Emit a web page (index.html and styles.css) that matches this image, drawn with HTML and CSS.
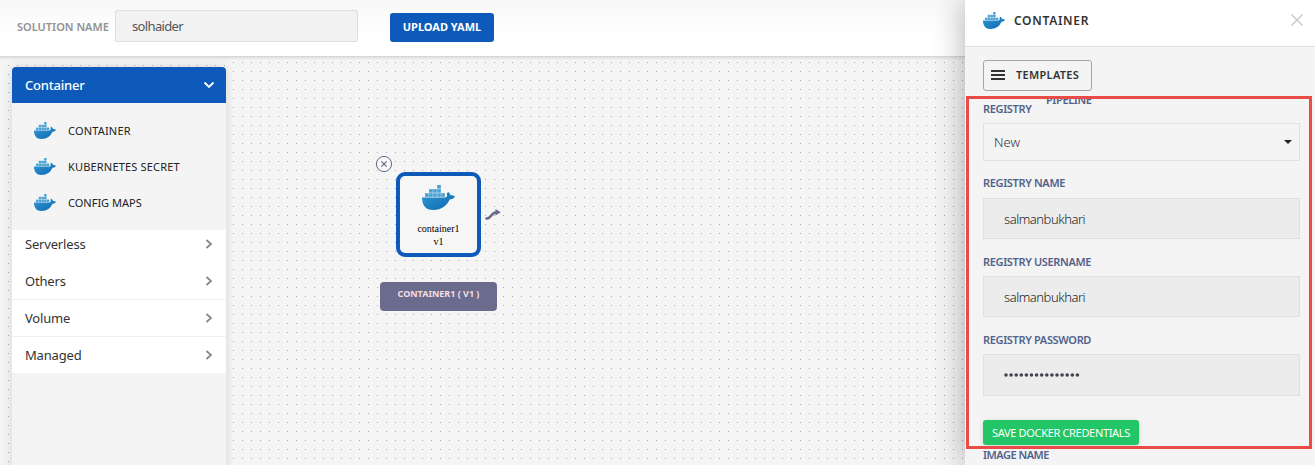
FILE: index.html
```
<!DOCTYPE html>
<html lang="en">
<head>
<meta charset="utf-8">
<title>Solution designer</title>
<link rel="stylesheet" href="styles.css">
</head>
<body>
<svg class="defs" width="0" height="0" aria-hidden="true">
  <defs>
    <linearGradient id="hull" x1="0" y1="0" x2="1" y2="1"><stop offset="0" stop-color="#3198d3"/><stop offset="1" stop-color="#0b68b0"/></linearGradient>
    <symbol id="whale" viewBox="0 0 98 76" preserveAspectRatio="none">
      <g fill="#4ba3d3"><rect x="45" y="0" width="11" height="11"/>
      <rect x="21" y="12.500" width="11" height="11"/><rect x="33" y="12.500" width="11" height="11"/><rect x="45" y="12.500" width="11" height="11"/>
      <rect x="9" y="25" width="11" height="11"/><rect x="21" y="25" width="11" height="11"/><rect x="33" y="25" width="11" height="11"/><rect x="45" y="25" width="11" height="11"/><rect x="57" y="25" width="11" height="11"/></g>
      <path fill="url(#hull)" d="M0 38H67C73 38 76 35 74 30C73 26 75 22 78 21C82 24 84 28 85 31C90 31 95 32 98 35C95 41 88 44 82 44C74 63 58 76 33 76C12 76 0 62 0 38Z"/>
    </symbol>
  </defs>
</svg>
<div class="app">
  <header class="topbar">
    <label class="topbar-label">SOLUTION NAME</label>
    <div class="name-input">solhaider</div>
    <button class="upload">UPLOAD YAML</button>
  </header>
  <main class="workspace">
    <aside class="palette">
      <nav class="accordion">
        <div class="group-open"><span>Container</span><svg width="12" height="8" viewBox="0 0 12 8"><path d="M1.500 1.500L6 6L10.500 1.500" fill="none" stroke="#fff" stroke-width="1.800"/></svg></div>
        <ul class="items">
          <li><svg class="whale-sm"><use href="#whale"/></svg>CONTAINER</li>
          <li><svg class="whale-sm"><use href="#whale"/></svg>KUBERNETES SECRET</li>
          <li class="snug"><svg class="whale-sm"><use href="#whale"/></svg>CONFIG MAPS</li>
        </ul>
        <div class="group group-first"><span>Serverless</span><svg class="chev" viewBox="0 0 8 10"><path d="M1.500 1L6 5L1.500 9"/></svg></div>
        <div class="group ruled"><span>Others</span><svg class="chev" viewBox="0 0 8 10"><path d="M1.500 1L6 5L1.500 9"/></svg></div>
        <div class="group ruled"><span>Volume</span><svg class="chev" viewBox="0 0 8 10"><path d="M1.500 1L6 5L1.500 9"/></svg></div>
        <div class="group group-last"><span>Managed</span><svg class="chev" viewBox="0 0 8 10"><path d="M1.500 1L6 5L1.500 9"/></svg></div>
      </nav>
    </aside>
    <section class="canvas">
      <svg class="remove" width="18" height="18" viewBox="0 0 18 18"><circle cx="9" cy="9" r="7.600" fill="#f8f8f8" stroke="#67678a" stroke-width="1"/><path d="M6.300 6.300L11.700 11.700M11.700 6.300L6.300 11.700" stroke="#67678a" stroke-width="1.200"/></svg>
      <div class="node">
        <svg class="whale-lg"><use href="#whale"/></svg>
        <span>container1</span><span>v1</span>
      </div>
      <svg class="connector" width="17" height="12" viewBox="0 0 17 12"><path d="M1.500 9.500C6.500 9.500 6 3.200 11.500 3.200" fill="none" stroke="#69698c" stroke-width="2.600" stroke-linecap="round"/><path d="M10.500 0L15.800 3.200L10.500 6.500Z" fill="#69698c"/></svg>
      <div class="node-label">CONTAINER1 ( V1 )</div>
    </section>
  </main>
  <aside class="drawer">
    <header class="drawer-head">
      <svg class="whale-sm"><use href="#whale"/></svg>
      <h2>CONTAINER</h2>
      <svg class="close" width="14" height="14" viewBox="0 0 14 14"><path d="M1.500 1.500L12.500 12.500M12.500 1.500L1.500 12.500" stroke="#ccc" stroke-width="1.500"/></svg>
    </header>
    <div class="drawer-body">
      <button class="templates"><span class="bars"><i></i><i></i><i></i></span>TEMPLATES</button>
      <div class="clip"><span>PIPELINE</span></div>
      <label class="field-label first">REGISTRY</label>
      <div class="select">New<span class="caret"></span></div>
      <label class="field-label gap-a">REGISTRY NAME</label>
      <div class="field gap-b">salmanbukhari</div>
      <label class="field-label gap-c">REGISTRY USERNAME</label>
      <div class="field">salmanbukhari</div>
      <label class="field-label gap-c">REGISTRY PASSWORD</label>
      <div class="field secret"><svg width="76" height="4" viewBox="0 0 76 4"><path d="M2 2H74" stroke="#40444e" stroke-width="3.600" stroke-linecap="round" stroke-dasharray="0 5.100"/></svg></div>
      <button class="save">SAVE DOCKER CREDENTIALS</button>
      <label class="field-label last">IMAGE NAME</label>
    </div>
  </aside>
  <div class="highlight"></div>
</div>
</body>
</html>
```
FILE: styles.css
```
* { box-sizing: border-box; }
body { margin: 0; font-family: "Noto Sans", sans-serif; overflow: hidden; }
button { font-family: inherit; margin: 0; padding: 0; border: 0; white-space: nowrap; }
.defs { position: absolute; }
svg { display: block; flex: none; }

.app { position: relative; height: 465px; display: flex; flex-direction: column; overflow: hidden; background: #f5f5f5; }

.topbar { height: 57px; flex: none; display: flex; align-items: flex-start; padding-left: 17px; background: linear-gradient(#f8f8f8, #fff 65%); border-bottom: 1px solid #d8d8d8; box-shadow: 0 1px 3px rgba(0,0,0,.12); position: relative; z-index: 1; }
.topbar-label { width: 98px; padding-top: 19px; font-size: 11px; line-height: 16px; font-weight: 600; color: #929292; white-space: nowrap; }
.name-input { width: 243px; height: 32px; margin-top: 10px; padding-left: 16px; border: 1px solid #dedede; border-radius: 2px; background: #f2f2f2; font-size: 13px; line-height: 31px; letter-spacing: -.65px; color: #555; }
.upload { width: 104px; height: 29px; margin: 13px 0 0 32px; border-radius: 3px; background: #0d5aba; color: #fff; font-size: 11px; font-weight: 700; line-height: 27px; padding-bottom: 2px; }

.workspace { flex: 1; display: flex; min-height: 0; }
.palette { width: 232px; flex: none; padding: 10px 6px 0 12px; background: radial-gradient(circle at .5px .5px, #aaa .6px, transparent .8px) 8px 8px / 9px 9px #f5f5f5; }
.accordion { height: 420px; background: #f4f4f4; box-shadow: 0 0 12px rgba(0,0,0,.13); border-radius: 4px 4px 0 0; color: #333; font-size: 13px; }
.group-open { height: 36px; padding: 0 11px 0 13px; display: flex; align-items: center; justify-content: space-between; background: #0d5aba; color: #fff; font-weight: 500; letter-spacing: -.2px; border-radius: 4px 4px 0 0; }
.items { list-style: none; margin: 0; padding: 9px 0 10px 22px; }
.items li { height: 36px; display: flex; align-items: center; gap: 12px; font-size: 11px; letter-spacing: .18px; color: #222; }
.items .snug { letter-spacing: 0; }
.whale-sm { width: 22px; height: 17px; }
.group { height: 37px; padding: 0 13px; display: flex; align-items: center; justify-content: space-between; background: #fff; letter-spacing: -.18px; }
.group-first { height: 33px; padding-bottom: 6px; }
.group-last { height: 36px; }
.ruled { border-bottom: 1px solid #f0f0f0; }
.chev { width: 8px; height: 10px; fill: none; stroke: #858585; stroke-width: 1.700; }

.canvas { flex: 1; position: relative; background: radial-gradient(circle at .5px .5px, #aaa .6px, transparent .8px) 1px 5px / 9px 9px #f5f5f5; }
.remove { position: absolute; left: 143px; top: 98px; }
.node { position: absolute; left: 164px; top: 115px; width: 85px; height: 85px; border: 4px solid #0d5aba; border-radius: 9px; background: #f6f6f6; display: flex; flex-direction: column; align-items: center; padding-top: 9px; font: 10px/13px "Liberation Serif", serif; color: #000; }
.whale-lg { width: 33px; height: 25px; margin-bottom: 12px; }
.connector { position: absolute; left: 253px; top: 152px; }
.node-label { position: absolute; left: 148px; top: 225px; width: 117px; height: 29px; border-radius: 4px; background: #6b6b8d; color: #f3dfe0; font-size: 9px; font-weight: 700; line-height: 23px; text-align: center; }

.drawer { position: absolute; z-index: 2; left: 965px; top: 0; width: 350px; height: 465px; background: #f4f4f4; box-shadow: 0 0 30px rgba(0,0,0,.32); }
.drawer-head { height: 47px; padding: 0 11px 6px 18px; display: flex; align-items: center; background: #fff; border-bottom: 1px solid #dfdfdf; }
.drawer-head h2 { margin: 0 0 0 9px; font-size: 12px; font-weight: 600; letter-spacing: .7px; color: #333; }
.close { margin-left: auto; }
.drawer-body { position: relative; padding: 13px 15px 0 18px; display: flex; flex-direction: column; align-items: stretch; }
.templates { width: 109px; height: 31px; padding: 0 0 2px 7px; display: flex; align-items: center; gap: 11px; border: 1px solid #a6a6a6; border-radius: 3px; background: transparent; color: #333; font-size: 11px; font-weight: 600; letter-spacing: .3px; }
.bars { width: 14px; display: grid; gap: 2px; }
.bars i { height: 2px; background: #333; }
.clip { position: absolute; left: 81px; top: 51px; width: 60px; height: 7px; overflow: hidden; font-size: 11px; font-weight: 600; line-height: 14px; letter-spacing: -.4px; color: #51628a; }
.clip span { display: block; margin-top: -5px; }
.field-label { margin-bottom: 7px; font-size: 11px; font-weight: 600; line-height: 14px; letter-spacing: -.35px; color: #51628a; }
.first { margin-top: 11px; }
.select { height: 38px; padding: 0 7px 0 10px; display: flex; align-items: center; justify-content: space-between; border: 1px solid #e0e0e0; font-size: 13px; font-weight: 300; color: #333; }
.caret { border: 4px solid transparent; border-top-color: #222; border-bottom: 0; }
.gap-a { margin-top: 15px; }
.gap-b { margin-top: 1px; }
.gap-c { margin-top: 16px; }
.field { height: 41px; padding-left: 20px; display: flex; align-items: center; border: 1px solid #e0e0e0; background: #ececec; font-size: 13px; font-weight: 300; letter-spacing: -.47px; color: #222; }
.secret { height: 42px; }
.save { width: 156px; height: 25px; margin-top: 24px; border-radius: 3px; background: #22c666; box-shadow: 0 1px 5px rgba(0,0,0,.14); color: #fff; font-size: 11px; letter-spacing: -.33px; }
.last { margin-top: 3px; letter-spacing: -.5px; }
.highlight { position: absolute; z-index: 3; left: 966px; top: 96px; width: 346px; height: 353px; border: 3px solid #e94b47; }
```
